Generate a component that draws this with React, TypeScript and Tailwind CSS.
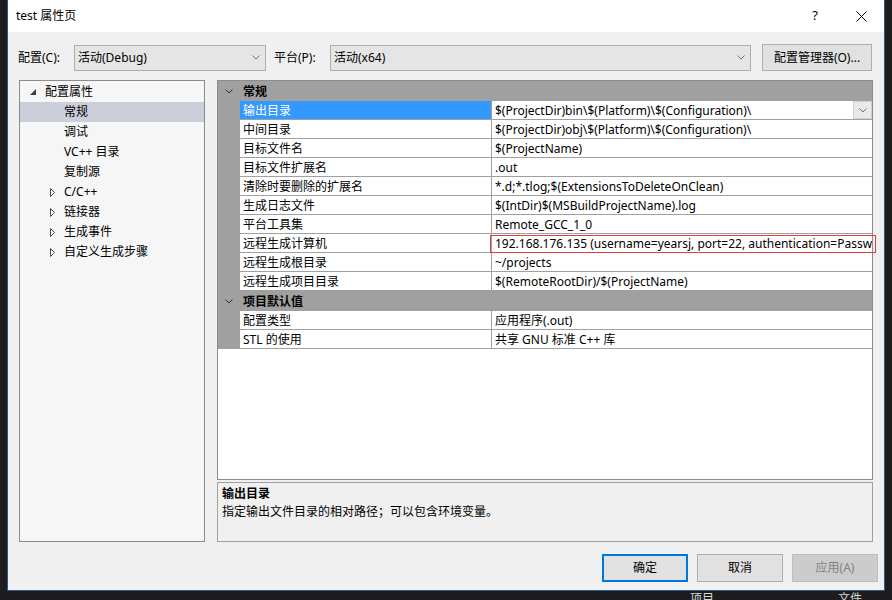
import React from "react"

const generalRows: [string, string][] = [
  ["输出目录", "$(ProjectDir)bin\\$(Platform)\\$(Configuration)\\"],
  ["中间目录", "$(ProjectDir)obj\\$(Platform)\\$(Configuration)\\"],
  ["目标文件名", "$(ProjectName)"],
  ["目标文件扩展名", ".out"],
  ["清除时要删除的扩展名", "*.d;*.tlog;$(ExtensionsToDeleteOnClean)"],
  ["生成日志文件", "$(IntDir)$(MSBuildProjectName).log"],
  ["平台工具集", "Remote_GCC_1_0"],
  ["远程生成计算机", "192.168.176.135 (username=yearsj, port=22, authentication=Password)"],
  ["远程生成根目录", "~/projects"],
  ["远程生成项目目录", "$(RemoteRootDir)/$(ProjectName)"],
]

const defaultRows: [string, string][] = [
  ["配置类型", "应用程序(.out)"],
  ["STL 的使用", "共享 GNU 标准 C++ 库"],
]

const treeItems = [
  { label: "常规", selected: true },
  { label: "调试" },
  { label: "VC++ 目录" },
  { label: "复制源" },
  { label: "C/C++", collapsed: true },
  { label: "链接器", collapsed: true },
  { label: "生成事件", collapsed: true },
  { label: "自定义生成步骤", collapsed: true },
]

function Chevron({ className = "" }: { className?: string }) {
  return (
    <svg width="8" height="5" viewBox="0 0 8 5" className={className}>
      <polyline points="0.5,0.5 4,4 7.5,0.5" fill="none" stroke="currentColor" strokeWidth="1" />
    </svg>
  )
}

function Combo({ value, width }: { value: string; width: string }) {
  return (
    <div className={`${width} h-[26px] flex items-center justify-between border border-[#adadad] bg-[#e5e5e5] pl-[3px] pr-[5px]`}>
      <span>{value}</span>
      <Chevron className="text-[#707070]" />
    </div>
  )
}

function Category({ label }: { label: string }) {
  return (
    <div className="flex h-[20px] items-center bg-[#a0a0a0] pt-[1px]">
      <div className="flex w-[22px] justify-center">
        <Chevron className="text-[#303030]" />
      </div>
      <span className="pl-[3px] font-bold">{label}</span>
    </div>
  )
}

function Row({ name, value, selected, dropdown, marked }: {
  name: string
  value: string
  selected?: boolean
  dropdown?: boolean
  marked?: boolean
}) {
  return (
    <div className="relative flex h-[19px]">
      <div className="w-[22px] shrink-0 bg-[#a0a0a0]" />
      <div
        className={`w-[252px] shrink-0 border-b border-r border-[#a0a0a0] pl-[3px] pt-[1px] leading-[17px] ${
          selected ? "bg-[#3399ff] text-white" : "bg-white"
        }`}
      >
        {name}
      </div>
      <div className="relative flex min-w-0 flex-1 border-b border-[#a0a0a0] bg-white">
        <span className="min-w-0 flex-1 overflow-hidden whitespace-nowrap pl-[3px] pt-[1px] leading-[17px]">{value}</span>
        {dropdown && (
          <div className="flex w-[19px] shrink-0 items-center justify-center border border-[#cfcfcf] bg-[#e9e9e9]">
            <Chevron className="text-[#707070]" />
          </div>
        )}
      </div>
      {marked && (
        <div className="absolute -right-[4px] top-[1px] bottom-0 left-[272px] border border-[#e23b3b]" />
      )}
    </div>
  )
}

export default function App() {
  return (
    <div className="flex h-[600px] w-[892px] flex-col overflow-hidden bg-[#1d1d1f] font-['Segoe_UI','Noto_Sans','Noto_Sans_CJK_SC',sans-serif] text-[12px] text-black">
      <div className="ml-[7px] flex w-[878px] flex-col border-x border-b border-[#2a5b86] bg-[#f0f0f0]">
        {/* title bar */}
        <div className="flex h-[32px] items-center bg-white pl-[8px]">
          <span className="flex-1">test 属性页</span>
          <span className="w-[46px] text-center text-[13px]">?</span>
          <div className="flex w-[46px] justify-center">
            <svg width="11" height="11" viewBox="0 0 11 11">
              <line x1="0.5" y1="0.5" x2="10.5" y2="10.5" stroke="#000" strokeWidth="1" />
              <line x1="10.5" y1="0.5" x2="0.5" y2="10.5" stroke="#000" strokeWidth="1" />
            </svg>
          </div>
        </div>

        {/* configuration row */}
        <div className="mt-[12px] flex h-[27px] items-center pl-[10px] pr-[12px]">
          <span className="w-[56px]">配置(C):</span>
          <Combo value="活动(Debug)" width="w-[192px]" />
          <span className="ml-[8px] w-[56px]">平台(P):</span>
          <Combo value="活动(x64)" width="w-[421px]" />
          <button className="ml-[11px] h-[27px] w-[110px] border border-[#adadad] bg-[#e1e1e1]">配置管理器(O)...</button>
        </div>

        {/* main area */}
        <div className="mt-[9px] flex h-[462px] gap-[12px] px-[11px]">
          <div className="w-[186px] shrink-0 border border-[#8c8c8c] bg-[#f6f6f6] pt-[1px]">
            <div className="flex h-[20px] items-center">
              <svg width="6" height="6" viewBox="0 0 6 6" className="ml-[10px]">
                <polygon points="6,0 6,6 0,6" fill="#3c3c3c" />
              </svg>
              <span className="ml-[9px]">配置属性</span>
            </div>
            {treeItems.map((item) => (
              <div
                key={item.label}
                className={`flex h-[20px] items-center ${item.selected ? "bg-[#cccedb]" : ""}`}
              >
                <div className="flex w-[44px] justify-end pr-[9px]">
                  {item.collapsed && (
                    <svg width="5" height="9" viewBox="0 0 5 9">
                      <polygon points="0.5,0.5 4.5,4.5 0.5,8.5" fill="none" stroke="#4a4a4a" strokeWidth="1" />
                    </svg>
                  )}
                </div>
                <span>{item.label}</span>
              </div>
            ))}
          </div>

          <div className="flex w-[656px] flex-col gap-[2px]">
            <div className="h-[400px] border border-[#8c8c8c] bg-white">
              <Category label="常规" />
              {generalRows.map(([n, v], i) => (
                <Row
                  key={n}
                  name={n}
                  value={v}
                  selected={i === 0}
                  dropdown={i === 0}
                  marked={i === 7}
                />
              ))}
              <Category label="项目默认值" />
              {defaultRows.map(([n, v]) => (
                <Row key={n} name={n} value={v} />
              ))}
            </div>
            <div className="h-[60px] border border-[#a0a0a0] bg-[#f0f0f0] px-[4px] pt-[2px]">
              <div className="font-bold leading-[18px]">输出目录</div>
              <div className="leading-[18px]">指定输出文件目录的相对路径；可以包含环境变量。</div>
            </div>
          </div>
        </div>

        {/* buttons */}
        <div className="mt-[12px] mb-[8px] flex h-[28px] justify-end gap-[9px] pr-[6px]">
          <button className="w-[86px] border-2 border-[#0078d7] bg-[#e1e1e1]">确定</button>
          <button className="w-[86px] border border-[#adadad] bg-[#e1e1e1]">取消</button>
          <button className="w-[86px] border border-[#bfbfbf] bg-[#cccccc] text-[#838383]">应用(A)</button>
        </div>
      </div>

      {/* background app strip */}
      <div className="relative h-[9px] text-[#d8d8d8]">
        <span className="absolute left-[690px] top-[2px] leading-[12px]">项目</span>
        <span className="absolute left-[838px] top-[2px] leading-[12px]">文件</span>
      </div>
    </div>
  )
}
